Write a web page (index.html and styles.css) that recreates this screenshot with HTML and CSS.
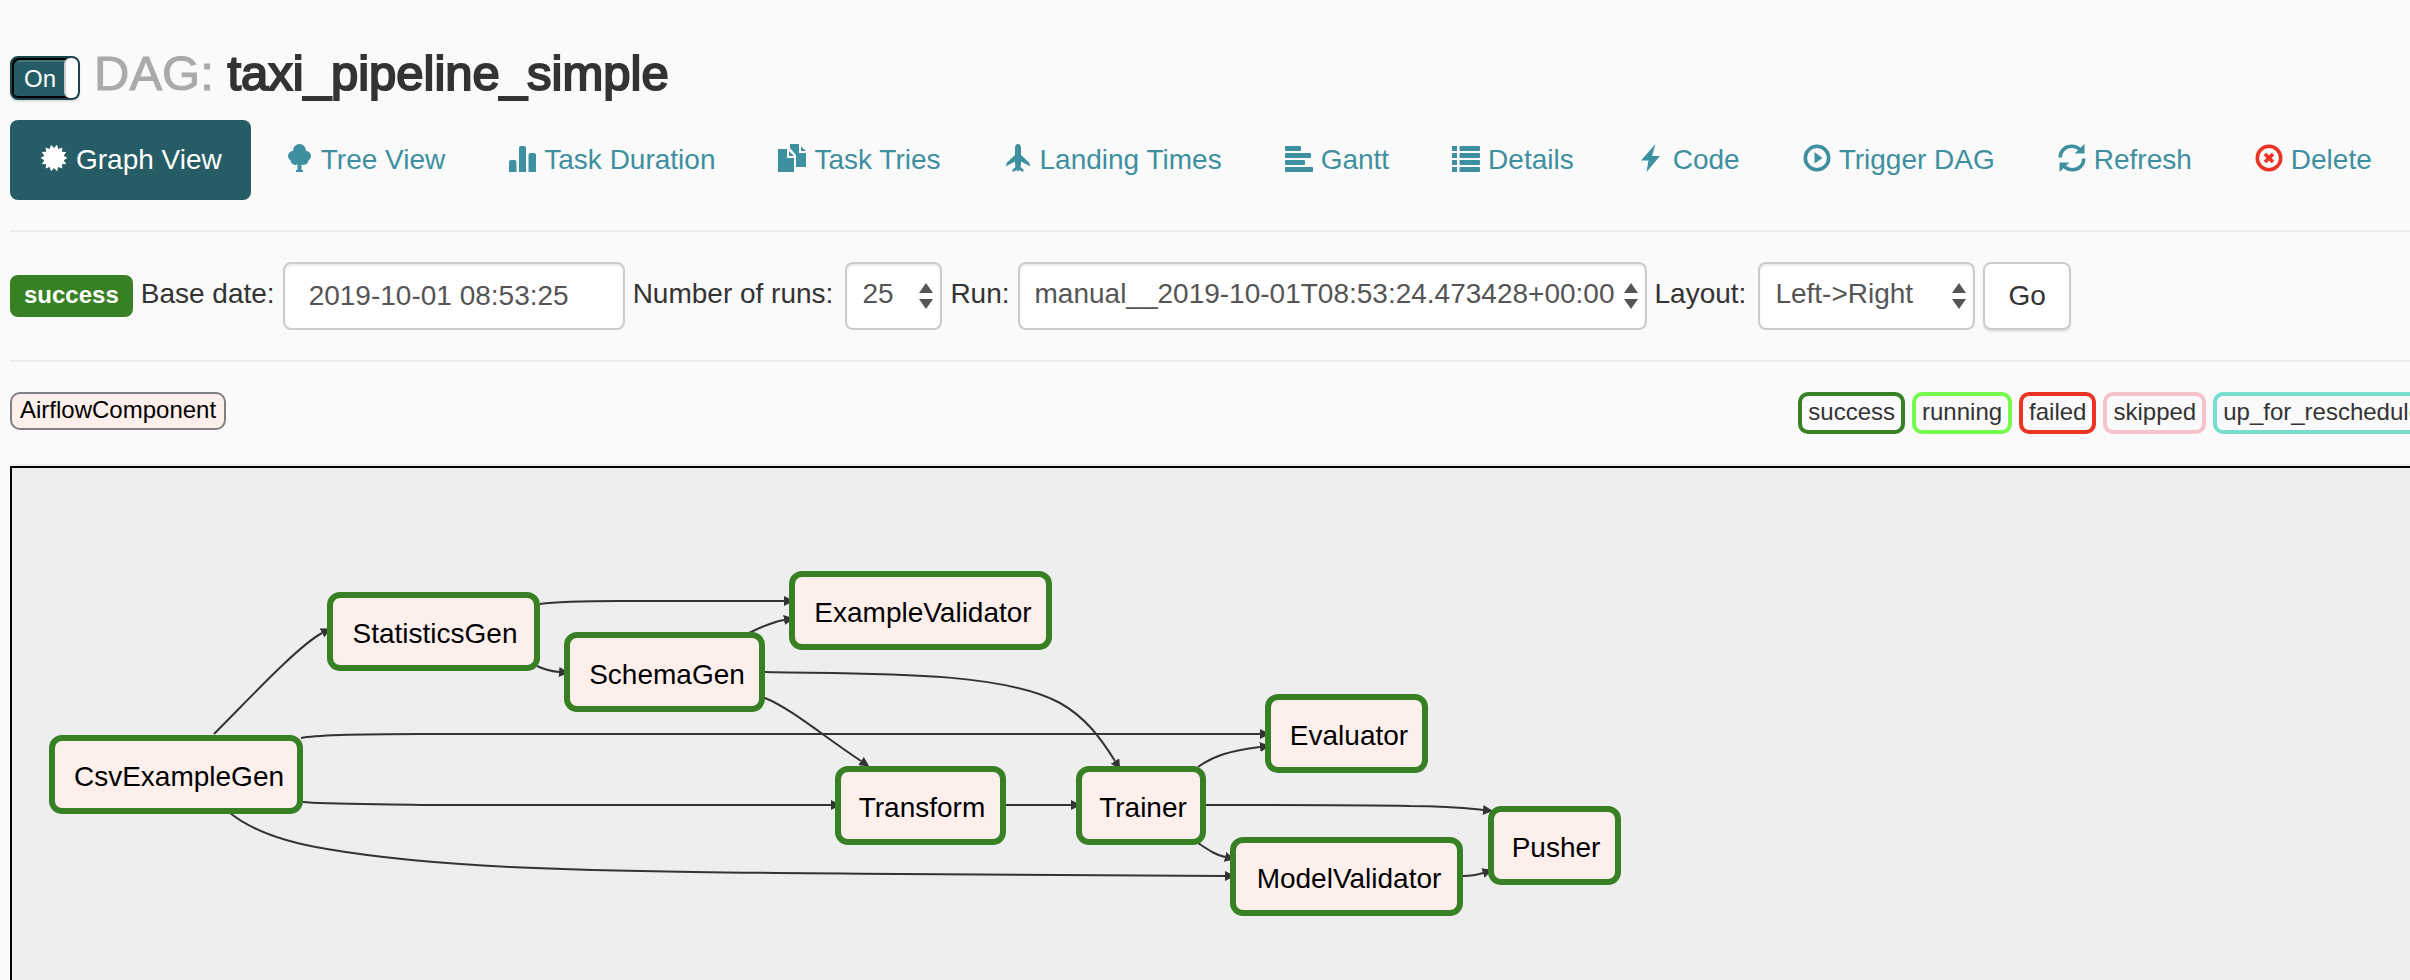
FILE: index.html
```html
<!DOCTYPE html>
<html lang="en">
<head>
<meta charset="utf-8">
<title>DAG: taxi_pipeline_simple</title>
<link rel="stylesheet" href="styles.css">
</head>
<body>
<header class="title-row">
  <label class="toggle">
    <input class="toggle-input" type="checkbox" checked>
    <span class="toggle-text">On</span>
    <span class="toggle-handle"></span>
  </label>
  <h1 class="title"><span class="title-prefix">DAG:</span> taxi_pipeline_simple</h1>
</header>

<nav class="tabs">
  <a class="tab tab-active" href="#graph"><svg class="icon" viewBox="0 0 28 32"><path d="M14 4 17 .8 18.3 5 22.4 3.4 21.8 7.8 26.2 8.1 23.7 11.8 27.5 14 23.7 16.2 26.2 19.9 21.8 20.2 22.4 24.6 18.3 23 17 27.2 14 24 11 27.2 9.7 23 5.6 24.6 6.2 20.2 1.8 19.9 4.3 16.2 .5 14 4.3 11.8 1.8 8.1 6.2 7.8 5.6 3.4 9.7 5 11 .8Z"/></svg>Graph View</a>
  <a class="tab" href="#tree"><svg class="icon" viewBox="0 0 28 32"><circle cx="14.5" cy="6.5" r="6.5"/><circle cx="8" cy="12" r="5"/><circle cx="21" cy="12" r="5"/><circle cx="10.5" cy="16" r="5"/><circle cx="18.5" cy="16" r="5"/><path d="M12.5 18h4v8h1.500v2h-7v-2h1.500z"/></svg>Tree View</a>
  <a class="tab" href="#duration"><svg class="icon" viewBox="0 0 28 32"><path d="M1 28V18a2 2 0 0 1 2-2h3.500a2 2 0 0 1 2 2V28zM11 28V4a2 2 0 0 1 2-2h3a2 2 0 0 1 2 2V28zM20.500 28V11a2 2 0 0 1 2-2H26a2 2 0 0 1 2 2V28z"/></svg>Task Duration</a>
  <a class="tab" href="#tries"><svg class="icon" viewBox="0 0 28 32"><path d="M0 5H9V14H16V28H0ZM11 7l5 5h-5zM12 0H21V9H28V23H18V11L12 4ZM23 2.500l5 4.500h-5z"/></svg>Task Tries</a>
  <a class="tab" href="#landing"><svg class="icon" viewBox="0 0 28 32"><path d="M14 0C16 0 17 2 17 4V11L25 18.500 26.500 22.500 17 17.500V20L16.500 23 19.500 25.500V28L15 26 14 28 13 26 8.500 28V25.500L11.500 23 11 20V17.500L1.500 22.500 3 18.500 11 11V4C11 2 12 0 14 0Z"/></svg>Landing Times</a>
  <a class="tab" href="#gantt"><svg class="icon" viewBox="0 0 28 32"><rect y="2" width="16" height="5" rx="1"/><rect y="9" width="26" height="5" rx="1"/><rect y="16" width="20" height="5" rx="1"/><rect y="23" width="28" height="5" rx="1"/></svg>Gantt</a>
  <a class="tab" href="#details"><svg class="icon" viewBox="0 0 28 32"><path d="M0 2h5v5H0zM0 9h5v5H0zM0 16h5v5H0zM0 23h5v5H0z"/><rect x="7.500" y="2" width="20.500" height="5" rx="1"/><rect x="7.500" y="9" width="20.500" height="5" rx="1"/><rect x="7.500" y="16" width="20.500" height="5" rx="1"/><rect x="7.500" y="23" width="20.500" height="5" rx="1"/></svg>Details</a>
  <a class="tab" href="#code"><svg class="icon" viewBox="0 0 28 32"><path d="M18.500 0 4 16.500H11.500L9.500 28 23 12H15Z"/></svg>Code</a>
  <a class="tab" href="#trigger"><svg class="icon" viewBox="0 0 28 32"><circle class="ring" cx="14" cy="14" r="11.700"/><path d="M11.500 8 19.500 14 11.500 19.500Z"/></svg>Trigger DAG</a>
  <a class="tab" href="#refresh"><svg class="icon" viewBox="0 0 28 32"><path class="ring" d="M2.300 13.500C2.300 6 8 2.300 13.500 2.300 17 2.300 20 3.500 22.300 6M25.700 14.500C25.700 22 20 25.700 14.500 25.700 11 25.700 8 24.500 5.700 22"/><path d="M26.500 0V9.500H16.500ZM1.500 28V18.500H11.500Z"/></svg>Refresh</a>
  <a class="tab" href="#delete"><svg class="icon icon-danger" viewBox="0 0 28 32"><circle class="ring" cx="14" cy="14" r="11.700"/><path class="ring" d="M10 10 18 18M18 10 10 18"/></svg>Delete</a>
</nav>

<form class="filters">
  <span class="state-label">success</span>
  <div class="field">
    <label class="field-label" for="base-date">Base date:</label>
    <input class="control date" id="base-date" type="text" value="2019-10-01 08:53:25">
  </div>
  <div class="field field-wide">
    <label class="field-label" for="runs">Number of runs:</label>
    <div class="picker picker-runs">
      <select class="control select" id="runs"><option>25</option></select>
      <svg class="arrows" viewBox="0 0 14 26"><path d="M7 0 14 10H0ZM0 16H14L7 26Z"/></svg>
    </div>
  </div>
  <div class="field">
    <label class="field-label" for="run">Run:</label>
    <div class="picker picker-run">
      <select class="control select" id="run"><option>manual__2019-10-01T08:53:24.473428+00:00</option></select>
      <svg class="arrows" viewBox="0 0 14 26"><path d="M7 0 14 10H0ZM0 16H14L7 26Z"/></svg>
    </div>
  </div>
  <div class="field field-wide">
    <label class="field-label" for="layout">Layout:</label>
    <div class="picker picker-layout">
      <select class="control select" id="layout"><option>Left-&gt;Right</option></select>
      <svg class="arrows" viewBox="0 0 14 26"><path d="M7 0 14 10H0ZM0 16H14L7 26Z"/></svg>
    </div>
  </div>
  <button class="control go" type="button">Go</button>
</form>

<div class="legend">
  <span class="operator">AirflowComponent</span>
  <div class="states">
    <span class="state state-success">success</span>
    <span class="state state-running">running</span>
    <span class="state state-failed">failed</span>
    <span class="state state-skipped">skipped</span>
    <span class="state state-reschedule">up_for_reschedule</span>
  </div>
</div>

<main class="graph">
  <svg class="graph-canvas">
    <defs>
      <marker id="arrow" markerUnits="userSpaceOnUse" markerWidth="10" markerHeight="10" refX="0" refY="5" orient="auto"><path class="arrow-head" d="M0 0 10 5 0 10Z"/></marker>
    </defs>
    <g transform="translate(-12 -468)">
      <g class="edges">
        <path d="M214 734C250 698 298 646 322 633"/>
        <path d="M540 604C560 601 590 601 620 601H784"/>
        <path d="M537 666C545 670 550 671 559 672"/>
        <path d="M749 633C765 625 773 622 784 620"/>
        <path d="M765 672C860 674 1000 670 1060 703 1085 717 1100 737 1115 761"/>
        <path d="M765 698C790 708 822 735 861 761"/>
        <path d="M301 738C315 735 370 734 420 734H1260"/>
        <path d="M303 802C320 804 370 804 420 805H831"/>
        <path d="M230 813C255 833 290 843 327 849 385 859 450 864 510 867 620 872 760 873 900 874L1225 876"/>
        <path d="M1006 805H1071"/>
        <path d="M1198 767C1215 755 1230 751 1260 747"/>
        <path d="M1206 805C1300 805 1380 805 1410 806 1450 806 1465 808 1483 810"/>
        <path d="M1198 843C1210 851 1216 855 1225 857"/>
        <path d="M1463 876C1472 876 1477 875 1483 873"/>
      </g>
      <g class="nodes">
        <rect x="52" y="738" width="248" height="73" rx="10"/><text x="179" y="786">CsvExampleGen</text>
        <rect x="330" y="595" width="207" height="73" rx="10"/><text x="435" y="643">StatisticsGen</text>
        <rect x="567" y="635" width="195" height="74" rx="10"/><text x="667" y="684">SchemaGen</text>
        <rect x="792" y="574" width="257" height="73" rx="10"/><text x="923" y="622">ExampleValidator</text>
        <rect x="838" y="769" width="165" height="73" rx="10"/><text x="922" y="817">Transform</text>
        <rect x="1079" y="769" width="124" height="73" rx="10"/><text x="1143" y="817">Trainer</text>
        <rect x="1268" y="697" width="157" height="73" rx="10"/><text x="1349" y="745">Evaluator</text>
        <rect x="1233" y="840" width="227" height="73" rx="10"/><text x="1349" y="888">ModelValidator</text>
        <rect x="1491" y="809" width="127" height="73" rx="10"/><text x="1556" y="857">Pusher</text>
      </g>
    </g>
  </svg>
</main>
</body>
</html>
```

FILE: styles.css
```css
* {
  box-sizing: border-box;
}

body {
  margin: 0;
  min-height: 100vh;
  padding: 46px 0 0 10px;
  display: flex;
  flex-direction: column;
  overflow-x: hidden;
  background: #fafafa;
  color: #333;
  font: 28px/40px "Liberation Sans", Arial, sans-serif;
}

/* Title */
.title-row {
  display: flex;
  align-items: flex-end;
  gap: 14px;
}

.toggle {
  position: relative;
  width: 70px;
  height: 44px;
  padding-left: 12px;
  border: 2px solid #1a434b;
  border-radius: 8px;
  background: #265c65;
  box-shadow: inset 2px 2px #000, inset 0 -2px #000, inset 0 4px #44747c, 0 2px 2px rgba(0, 0, 0, 0.1);
  color: #fff;
  font-size: 24px;
  line-height: 42px;
}

.toggle-input {
  position: absolute;
  inset: 0;
  margin: 0;
  opacity: 0;
}

.toggle-handle {
  position: absolute;
  top: 0;
  right: 0;
  width: 14px;
  height: 40px;
  border-left: 2px solid #ccc;
  border-radius: 6px;
  background: #fff;
}

.title {
  margin: 0;
  font-size: 49px;
  font-weight: 400;
  line-height: 54px;
  -webkit-text-stroke: 2px currentColor;
}

.title-prefix {
  color: #aaa;
  line-height: 1;
  -webkit-text-stroke: 1px currentColor;
}

/* Tabs */
.tabs {
  display: flex;
  gap: 4px;
  margin-top: 20px;
  padding-bottom: 30px;
  border-bottom: 2px solid #eee;
}

.tab {
  display: flex;
  align-items: center;
  gap: 8px;
  padding: 20px 29px 20px 30px;
  border-radius: 8px;
  color: #3e8fa0;
  text-decoration: none;
  white-space: nowrap;
}

.tab-active {
  background: #265c65;
  color: #fff;
}

.icon {
  flex: none;
  width: 28px;
  height: 32px;
  fill: currentColor;
}

.icon-danger {
  color: #eb3323;
}

.ring {
  fill: none;
  stroke: currentColor;
  stroke-width: 3.600;
}

/* Filters */
.filters {
  display: flex;
  align-items: center;
  gap: 8px;
  padding: 30px 0;
  border-bottom: 2px solid #eee;
}

.state-label {
  padding: 3px 14px 5px;
  border-radius: 8px;
  background: #378023;
  color: #fff;
  font-size: 24px;
  font-weight: 700;
  line-height: 34px;
}

.field {
  display: flex;
  align-items: center;
  gap: 8px;
}

.field-wide {
  gap: 12px;
}

.field-label {
  padding-bottom: 4px;
  white-space: nowrap;
}

.control {
  height: 68px;
  border: 2px solid #ccc;
  border-radius: 8px;
  background: #fff;
  color: #555;
  font: inherit;
  box-shadow: inset 0 2px 2px rgba(0, 0, 0, 0.08);
}

.date {
  width: 342px;
  padding: 12px 24px;
}

.picker {
  position: relative;
}

.picker-runs {
  width: 97px;
}

.picker-run {
  width: 629px;
}

.picker-layout {
  width: 217px;
}

.select {
  display: block;
  width: 100%;
  padding: 10px 15px 14px;
  appearance: none;
}

.arrows {
  position: absolute;
  top: 21px;
  right: 9px;
  width: 14px;
  height: 26px;
  fill: #555;
  pointer-events: none;
}

.go {
  padding: 0 23px;
  color: #333;
  box-shadow: 0 2px 2px rgba(0, 0, 0, 0.1);
}

/* Legend */
.legend {
  display: flex;
  align-items: flex-start;
  justify-content: space-between;
  padding: 30px 0;
  border-bottom: 2px solid #eee;
  font-size: 24px;
}

.operator {
  padding: 0 8px 2px;
  border: 2px solid #808080;
  border-radius: 10px;
  background: #fdefeb;
  color: #000;
  line-height: 32px;
}

.states {
  display: flex;
  gap: 7px;
  margin-right: -22px;
}

.state {
  padding: 0 6px 2px;
  border: 4px solid;
  border-radius: 10px;
  line-height: 32px;
}

.state-success {
  border-color: #378023;
}

.state-running {
  border-color: #75fb4c;
}

.state-failed {
  border-color: #eb3323;
}

.state-skipped {
  border-color: #f6c2cb;
}

.state-reschedule {
  border-color: #75decf;
}

/* Graph */
.graph {
  flex: 1;
  display: flex;
  border: solid #000;
  border-width: 2px 0 0 2px;
  background: #eee;
}

.graph-canvas {
  flex: 1;
  min-height: 480px;
}

.edges {
  fill: none;
  stroke: #333;
  stroke-width: 2;
}

.edges path {
  marker-end: url(#arrow);
}

.arrow-head {
  fill: #333;
  stroke: none;
}

.nodes rect {
  fill: #fdefeb;
  stroke: #378023;
  stroke-width: 6;
}

.nodes text {
  fill: #000;
  text-anchor: middle;
}
```
